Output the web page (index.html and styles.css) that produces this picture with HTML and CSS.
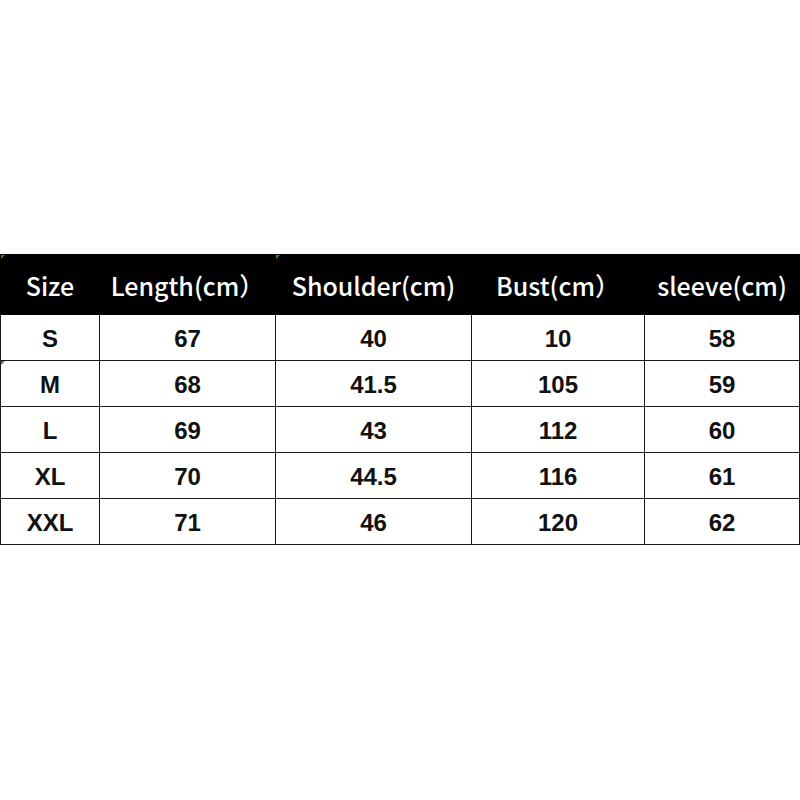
FILE: index.html
```html
<!DOCTYPE html>
<html lang="en">
<head>
<meta charset="utf-8">
<title>Size chart</title>
<link rel="stylesheet" href="styles.css">
</head>
<body>
<div class="page">
  <table class="size-table">
    <colgroup>
      <col class="c1"><col class="c2"><col class="c3"><col class="c4"><col class="c5">
    </colgroup>
    <thead>
      <tr>
        <th class="mark">Size</th>
        <th>Length(cm）</th>
        <th class="mark">Shoulder(cm)</th>
        <th>Bust(cm）</th>
        <th>sleeve(cm)</th>
      </tr>
    </thead>
    <tbody>
      <tr><td>S</td><td>67</td><td>40</td><td>10</td><td>58</td></tr>
      <tr><td class="mark">M</td><td>68</td><td>41.5</td><td>105</td><td>59</td></tr>
      <tr><td>L</td><td>69</td><td>43</td><td>112</td><td>60</td></tr>
      <tr><td>XL</td><td>70</td><td>44.5</td><td>116</td><td>61</td></tr>
      <tr><td>XXL</td><td>71</td><td>46</td><td>120</td><td>62</td></tr>
    </tbody>
  </table>
</div>
</body>
</html>
```
FILE: styles.css
```css
html, body {
  margin: 0;
  padding: 0;
  background: #fff;
}
.page {
  padding-top: 254px;
  width: 800px;
}
.size-table {
  width: 799px;
  table-layout: fixed;
  border-collapse: collapse;
  font-family: "Liberation Sans", Arial, sans-serif;
}
.c1 { width: 99px; }
.c2 { width: 176px; }
.c3 { width: 196px; }
.c4 { width: 173px; }
.c5 { width: 155px; }
.size-table th {
  background: #000;
  color: #fff;
  height: 59px;
  padding: 0;
  font-family: "Noto Sans CJK SC", "Noto Sans", sans-serif;
  font-weight: 500;
  font-size: 25px;
  text-align: center;
  vertical-align: middle;
  border: 1px solid #000;
}
.size-table td {
  height: 42px;
  padding: 3px 0 0;
  text-align: center;
  vertical-align: middle;
  font-size: 24px;
  font-weight: bold;
  color: #111;
  border: 1.5px solid #1a1a1a;
}
.mark {
  position: relative;
}
.mark::before {
  content: "";
  position: absolute;
  left: 0;
  top: 0;
  border-top: 4px solid #2e8b2e;
  border-right: 4px solid transparent;
}
```
